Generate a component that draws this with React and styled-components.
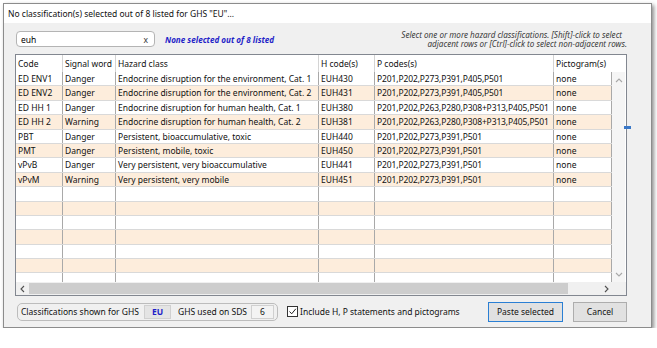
import React from "react";
import styled, { createGlobalStyle } from "styled-components";

const GlobalStyle = createGlobalStyle`
  html, body { margin: 0; padding: 0; background: #ffffff; }
  body {
    font-family: "Noto Sans", "Open Sans", sans-serif;
    font-size: 8.5px;
    color: #000;
  }
  * { box-sizing: border-box; }
`;

const Page = styled.div`
  padding: 3px 0 0 3px;
`;

const Window = styled.div`
  position: relative;
  width: 649px;
  height: 325px;
  border: 1px solid #8c8c8c;
  background: #f0f0f0;
  box-shadow: 2px 2px 4px rgba(0, 0, 0, 0.45);
  display: flex;
  flex-direction: column;
`;

const TitleBar = styled.div`
  height: 19px;
  background: #ffffff;
  padding-left: 4px;
  display: flex;
  align-items: center;
  font-size: 8.5px;
  color: #111;
`;

const Body = styled.div`
  flex: 1;
  padding: 5px 24px 0 11px;
  display: flex;
  flex-direction: column;
`;

const TopRow = styled.div`
  height: 22px;
  display: flex;
  align-items: center;
  margin-bottom: 4px;
`;

const SearchBox = styled.div`
  margin-left: 1px;
  width: 139px;
  height: 16px;
  border: 1px solid #b4b4b4;
  border-radius: 4px;
  background: #fff;
  display: flex;
  align-items: center;
  justify-content: space-between;
  padding: 0 6px 0 4px;
`;

const ClearX = styled.span`
  color: #333;
`;

const SelectedInfo = styled.span`
  margin-left: 10px;
  color: #1f1fc8;
  font-weight: bold;
  font-style: italic;
  font-size: 8.1px;
`;

const Hint = styled.div`
  margin-left: auto;
  text-align: right;
  font-style: italic;
  font-size: 8.1px;
  line-height: 9.5px;
  color: #3a3a3a;
`;

const HintLine = styled.div`
  padding-right: ${(p) => p.$pad || 0}px;
`;

const TableFrame = styled.div`
  height: 242px;
  border: 1px solid #828790;
  background: #ffffff;
  display: flex;
  flex-direction: column;
`;

const COLS = "47px 53px 203px 56px 179px";

const HeaderRow = styled.div`
  display: grid;
  grid-template-columns: ${COLS} 1fr;
  height: 17px;
  flex: none;
`;

const HeaderCell = styled.div`
  padding-left: 2px;
  line-height: 18px;
  white-space: nowrap;
  border-right: ${(p) => (p.$last ? "none" : "1px solid #d4d4d4")};
  color: #111;
`;

const Middle = styled.div`
  flex: 1;
  display: flex;
  overflow: hidden;
`;

const Rows = styled.div`
  width: 596px;
  overflow: hidden;
`;

const Row = styled.div`
  display: grid;
  grid-template-columns: ${COLS} 58px;
  height: 14.4px;
  background: ${(p) => (p.$alt ? "#fdeddc" : "#ffffff")};
  border-bottom: 1px solid #d9d9d9;
`;

const Cell = styled.div`
  padding-left: 2px;
  line-height: 13.6px;
  white-space: nowrap;
  overflow: hidden;
  letter-spacing: ${(p) => (p.$tight ? "-0.12px" : "normal")};
  border-right: 1px solid #a9a9a9;
  color: #111;
`;

const VScroll = styled.div`
  width: 13px;
  background: #f5f5f5;
  display: flex;
  flex-direction: column;
  justify-content: space-between;
  align-items: center;
  padding: 5px 0 3px;
`;

const HScroll = styled.div`
  height: 13px;
  flex: none;
  display: flex;
  align-items: stretch;
  background: #f0f0f0;
`;

const ArrowBox = styled.div`
  width: 13px;
  flex: none;
  display: flex;
  align-items: center;
  justify-content: center;
`;

const Track = styled.div`
  flex: 1;
  display: flex;
  align-items: center;
`;

const Thumb = styled.div`
  width: 539px;
  height: 11px;
  background: #cdcdcd;
`;

const Corner = styled.div`
  width: 13px;
  flex: none;
  background: #f0f0f0;
`;

const BottomRow = styled.div`
  margin-top: 5px;
  height: 21px;
  display: flex;
  align-items: center;
`;

const GroupBox = styled.div`
  margin-left: 2px;
  width: 261px;
  height: 18px;
  border: 1px solid #bcbcbc;
  border-radius: 5px;
  display: flex;
  align-items: center;
  padding-left: 3px;
  color: #111;
`;

const ValueBox = styled.span`
  display: inline-flex;
  align-items: center;
  justify-content: center;
  width: ${(p) => p.$w}px;
  height: 14px;
  margin: 0 ${(p) => p.$mr}px 0 ${(p) => p.$ml}px;
  border: 1px solid #d0d0d0;
  background: ${(p) => (p.$blue ? "#e4e4e4" : "#f3f3f3")};
  color: ${(p) => (p.$blue ? "#1f1fc8" : "#111")};
  font-weight: ${(p) => (p.$blue ? "bold" : "normal")};
`;

const CheckLabel = styled.label`
  margin-left: 9px;
  display: flex;
  align-items: center;
  gap: 2px;
  color: #111;
`;

const CheckBox = styled.span`
  width: 11px;
  height: 11px;
  border: 1px solid #333;
  background: #fff;
  display: inline-flex;
  align-items: center;
  justify-content: center;
`;

const Button = styled.button`
  font: inherit;
  color: #111;
  height: 20px;
  width: ${(p) => p.$w}px;
  margin-left: ${(p) => p.$ml || 0};
  background: #e1e1e1;
  border: 1px solid ${(p) => (p.$primary ? "#2a7fd4" : "#adadad")};
  padding: 0;
`;

const Marker = styled.div`
  position: absolute;
  left: 620px;
  top: 122px;
  width: 7px;
  height: 3px;
  background: #3a78c8;
`;

const data = [
  ["ED ENV1", "Danger", "Endocrine disruption for the environment, Cat. 1", "EUH430", "P201,P202,P273,P391,P405,P501", "none"],
  ["ED ENV2", "Danger", "Endocrine disruption for the environment, Cat. 2", "EUH431", "P201,P202,P273,P391,P405,P501", "none"],
  ["ED HH 1", "Danger", "Endocrine disruption for human health, Cat. 1", "EUH380", "P201,P202,P263,P280,P308+P313,P405,P501", "none"],
  ["ED HH 2", "Warning", "Endocrine disruption for human health, Cat. 2", "EUH381", "P201,P202,P263,P280,P308+P313,P405,P501", "none"],
  ["PBT", "Danger", "Persistent, bioaccumulative, toxic", "EUH440", "P201,P202,P273,P391,P501", "none"],
  ["PMT", "Danger", "Persistent, mobile, toxic", "EUH450", "P201,P202,P273,P391,P501", "none"],
  ["vPvB", "Danger", "Very persistent, very bioaccumulative", "EUH441", "P201,P202,P273,P391,P501", "none"],
  ["vPvM", "Warning", "Very persistent, very mobile", "EUH451", "P201,P202,P273,P391,P501", "none"],
];

const rows = [...data, ...Array.from({ length: 7 }, () => ["", "", "", "", "", ""])];

const headers = ["Code", "Signal word", "Hazard class", "H code(s)", "P codes(s)", "Pictogram(s)"];

const Chevron = ({ dir, color }) => {
  const paths = {
    up: "M1 5 L4 2 L7 5",
    down: "M1 2 L4 5 L7 2",
    left: "M5 1 L2 4 L5 7",
    right: "M2 1 L5 4 L2 7",
  };
  return (
    <svg width="8" height="8" viewBox="0 0 8 8">
      <path d={paths[dir]} fill="none" stroke={color} strokeWidth="1.1" />
    </svg>
  );
};

export default function App() {
  return (
    <>
      <GlobalStyle />
      <Page>
        <Window>
          <TitleBar>No classification(s) selected out of 8 listed for GHS "EU"...</TitleBar>
          <Body>
            <TopRow>
              <SearchBox>
                <span>euh</span>
                <ClearX>x</ClearX>
              </SearchBox>
              <SelectedInfo>None selected out of 8 listed</SelectedInfo>
              <Hint>
                <HintLine $pad={5}>Select one or more hazard classifications. [Shift]-click to select</HintLine>
                <HintLine>adjacent rows or [Ctrl]-click to select non-adjacent rows.</HintLine>
              </Hint>
            </TopRow>
            <TableFrame>
              <HeaderRow>
                {headers.map((h, i) => (
                  <HeaderCell key={h} $last={i === headers.length - 1}>
                    {h}
                  </HeaderCell>
                ))}
              </HeaderRow>
              <Middle>
                <Rows>
                  {rows.map((r, i) => (
                    <Row key={i} $alt={i % 2 === 1}>
                      {r.map((c, j) => (
                        <Cell key={j} $tight={j === 4}>{c}</Cell>
                      ))}
                    </Row>
                  ))}
                </Rows>
                <VScroll>
                  <Chevron dir="up" color="#a8a8a8" />
                  <Chevron dir="down" color="#a8a8a8" />
                </VScroll>
              </Middle>
              <HScroll>
                <ArrowBox>
                  <Chevron dir="left" color="#505050" />
                </ArrowBox>
                <Track>
                  <Thumb />
                </Track>
                <ArrowBox>
                  <Chevron dir="right" color="#505050" />
                </ArrowBox>
                <Corner />
              </HScroll>
            </TableFrame>
            <BottomRow>
              <GroupBox>
                Classifications shown for GHS
                <ValueBox $w={27} $ml={5} $mr={7} $blue>EU</ValueBox>
                GHS used on SDS
                <ValueBox $w={23} $ml={4} $mr={0}>6</ValueBox>
              </GroupBox>
              <CheckLabel>
                <CheckBox>
                  <svg width="9" height="9" viewBox="0 0 9 9">
                    <path d="M1.5 4.5 L3.7 6.8 L7.8 1.8" fill="none" stroke="#222" strokeWidth="1" />
                  </svg>
                </CheckBox>
                Include H, P statements and pictograms
              </CheckLabel>
              <Button $w={75} $ml="auto" $primary>Paste selected</Button>
              <Button $w={54} $ml="10px">Cancel</Button>
            </BottomRow>
          </Body>
          <Marker />
        </Window>
      </Page>
    </>
  );
}
